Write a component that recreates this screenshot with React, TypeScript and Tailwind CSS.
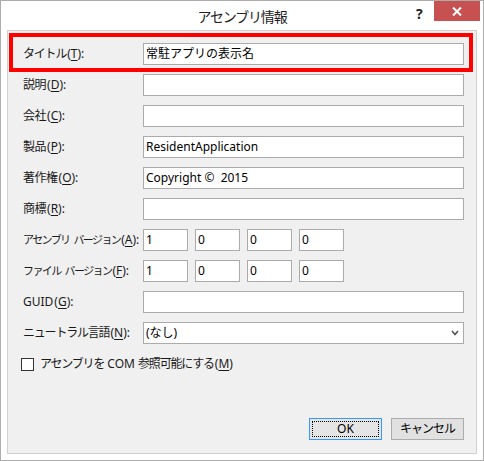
import { ReactNode } from 'react';

const font = { fontFamily: '"Noto Sans", "Noto Sans CJK JP", sans-serif' };

function Label({ text, k, tight = false, track = 'tracking-[-1.2px]' }: { text: string; k: string; tight?: boolean; track?: string }) {
  const parts = text.split(' ');
  return (
    <span className="whitespace-pre">
      {parts.map((p, i) => (
        <span key={i}>
          {i > 0 && <span className="inline-block w-[4px]" />}
          <span className={tight ? 'text-[11px] tracking-[-1.6px]' : track}>{p}</span>
        </span>
      ))}
      <span className="ml-[1px]">(</span>
      <span className="underline underline-offset-2">{k}</span>):
    </span>
  );
}

function Row({ label, children }: { label: ReactNode; children: ReactNode }) {
  return (
    <div className="flex items-center h-[22px]">
      <div className="w-[120px] shrink-0 text-[12px] text-[#1a1a1a]">{label}</div>
      {children}
    </div>
  );
}

function TextBox({ value = '', className = 'flex-1' }: { value?: string; className?: string }) {
  return (
    <div className={`${className} h-[22px] border border-[#ababab] bg-white px-[2px] flex items-center text-[12px] text-black whitespace-pre overflow-hidden`}>
      {value}
    </div>
  );
}

function VersionRow() {
  return (
    <div className="flex gap-[7px]">
      <TextBox value="1" className="w-[45px]" />
      <TextBox value="0" className="w-[45px]" />
      <TextBox value="0" className="w-[45px]" />
      <TextBox value="0" className="w-[45px]" />
    </div>
  );
}

export default function App() {
  return (
    <div className="w-[484px] h-[461px] border border-[#adadad] bg-white flex flex-col" style={font}>
      <div className="h-[29px] relative flex items-center justify-center">
        <span className="text-[14px] tracking-[-1.2px] text-[#222] mt-[2px]">アセンブリ情報</span>
        <span className="absolute left-[415px] top-[2px] text-[14px] font-bold text-[#222]">?</span>
        <div className="absolute right-[3px] top-0 w-[46px] h-[20px] bg-[#c75050] flex items-center justify-center">
          <svg width="10" height="9" viewBox="0 0 10 9">
            <path d="M1 0.5 L9 8.5 M9 0.5 L1 8.5" stroke="white" strokeWidth="2" />
          </svg>
        </div>
      </div>
      <div className="mx-[6px] mb-[6px] flex-1 border border-[#d0d0d0] bg-[#f0f0f0] relative flex flex-col pt-[12px] pl-[15px] pr-[12px] pb-[13px]">
        <div className="absolute left-[1px] top-[2px] w-[464px] h-[39px] border-[4px] border-[#ff0000]" />
        <div className="flex flex-col gap-[9px]">
          <Row label={<Label text="タイトル" k="T" />}>
            <TextBox value="常駐アプリの表示名" />
          </Row>
          <Row label={<Label text="説明" k="D" track="tracking-[-0.5px]" />}>
            <TextBox />
          </Row>
          <Row label={<Label text="会社" k="C" track="tracking-[-0.5px]" />}>
            <TextBox />
          </Row>
          <Row label={<Label text="製品" k="P" track="tracking-[-0.5px]" />}>
            <TextBox value="ResidentApplication" />
          </Row>
          <Row label={<Label text="著作権" k="O" track="tracking-[-0.5px]" />}>
            <TextBox value="Copyright ©  2015" />
          </Row>
          <Row label={<Label text="商標" k="R" track="tracking-[-0.5px]" />}>
            <TextBox />
          </Row>
          <Row label={<Label text="アセンブリ バージョン" k="A" tight />}>
            <VersionRow />
          </Row>
          <Row label={<Label text="ファイル バージョン" k="F" tight />}>
            <VersionRow />
          </Row>
          <Row label={<Label text="GUID" k="G" track="tracking-normal" />}>
            <TextBox />
          </Row>
          <Row label={<Label text="ニュートラル言語" k="N" />}>
            <div className="flex-1 h-[22px] border border-[#ababab] bg-white pl-[2px] pr-[4px] flex items-center justify-between text-[12px] text-black">
              <span>(なし)</span>
              <svg width="8" height="6" viewBox="0 0 8 6">
                <path d="M1 1 L4 4.5 L7 1" stroke="#555" strokeWidth="1.6" fill="none" />
              </svg>
            </div>
          </Row>
        </div>
        <div className="mt-[12px] h-[16px] flex items-center gap-[6px] -ml-[2px]">
          <div className="w-[13px] h-[13px] border border-[#333] bg-white" />
          <span className="text-[12px] text-[#1a1a1a] whitespace-pre">
            <span className="tracking-[-1.2px]">アセンブリを</span> COM <span className="tracking-[-1.2px]">参照可能にする</span>
            <span className="ml-[1px]">(</span>
            <span className="underline underline-offset-2">M</span>)
          </span>
        </div>
        <div className="mt-auto flex justify-end gap-[9px]">
          <button className="w-[73px] h-[22px] border border-[#3399ff] bg-[#e5e5e5] p-[2px] text-[12px] text-black">
            <div className="w-full h-full border border-dotted border-black flex items-center justify-center">OK</div>
          </button>
          <button className="w-[73px] h-[22px] border border-[#acacac] bg-[#e1e1e1] flex items-center justify-center text-[12px] tracking-[-1px] text-black">
            キャンセル
          </button>
        </div>
      </div>
    </div>
  );
}
